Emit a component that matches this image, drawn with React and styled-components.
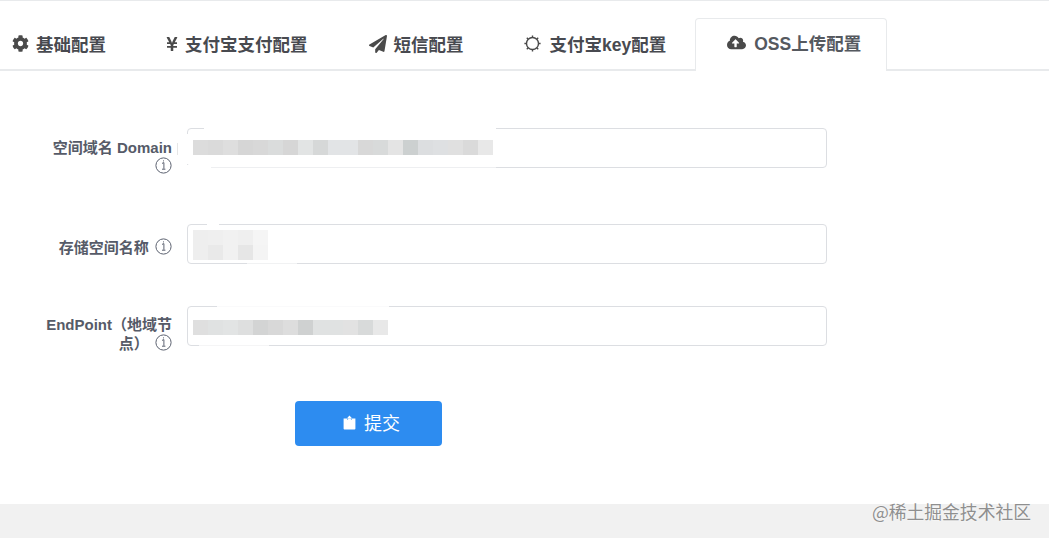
import React from "react";
import styled, { createGlobalStyle } from "styled-components";
import { FaCog, FaYenSign, FaPaperPlane, FaCloudUploadAlt } from "react-icons/fa";

const GlobalStyle = createGlobalStyle`
    html, body {
        margin: 0;
        padding: 0;
        background: #fff;
    }
    body {
        font-family: "Liberation Sans", "Noto Sans CJK SC", sans-serif;
        color: #515a6e;
    }
`;

const Page = styled.div`
    position: relative;
    width: 1049px;
    height: 538px;
    overflow: hidden;
    display: flex;
    flex-direction: column;
    border-top: 1px solid #e8eaec;
    box-sizing: border-box;
`;

const TabBar = styled.div`
    display: flex;
    align-items: flex-end;
    height: 70px;
    padding-top: 17px;
    box-sizing: border-box;
    border-bottom: 2px solid #e8eaec;
`;

const Tab = styled.div`
    display: flex;
    align-items: center;
    box-sizing: border-box;
    height: ${p => (p.$active ? "53px" : "51px")};
    margin-bottom: ${p => (p.$active ? "-2px" : "0")};
    padding: 0 ${p => p.$right}px ${p => (p.$active ? "5px" : "0")} ${p => p.$left}px;
    gap: ${p => p.$gap}px;
    font-size: 17.5px;
    font-weight: 700;
    color: ${p => (p.$active ? "#55595f" : "#484a50")};
    white-space: nowrap;
    background: #fff;
    border: ${p => (p.$active ? "1px solid #e8eaec" : "0")};
    border-bottom: 0;
    border-radius: ${p => (p.$active ? "4px 4px 0 0" : "0")};
    svg {
        flex: none;
        color: #4a4a4a;
    }
`;

const Form = styled.div`
    display: flex;
    flex-direction: column;
    padding: 57px 0 0 42px;
`;

const Row = styled.div`
    display: flex;
    gap: 15px;
    height: 40px;
    margin-bottom: ${p => p.$space}px;
`;

const Label = styled.div`
    width: 130px;
    flex: none;
    padding-top: ${p => p.$top}px;
    box-sizing: border-box;
    text-align: right;
    font-size: 15px;
    font-weight: 700;
    line-height: 18px;
    color: #565b68;
`;

const Hint = styled.svg`
    width: 17px;
    height: 17px;
    margin-left: ${p => p.$left}px;
    vertical-align: -2px;
`;

const Field = styled.div`
    position: relative;
    width: 640px;
    height: 40px;
`;

const Input = styled.input`
    display: block;
    width: 100%;
    height: 100%;
    box-sizing: border-box;
    border: 1px solid #dcdee2;
    border-radius: 4px;
    background: #fff;
    outline: none;
`;

const Mosaic = styled.div`
    position: absolute;
    left: 6px;
    top: ${p => p.$top}px;
    display: grid;
    grid-template-columns: repeat(${p => p.$cols}, 15px);
    grid-auto-rows: 15px;
`;

const Pixel = styled.span`
    background: ${p => p.$tone};
`;

// the white smear left over from retouching, it eats parts of the input border
const Smear = styled.div`
    position: absolute;
    left: ${p => p.$x}px;
    top: ${p => p.$y}px;
    width: ${p => p.$w}px;
    height: ${p => p.$h}px;
    background: #fff;
    opacity: ${p => p.$fade || 1};
`;

const Tick = styled.div`
    position: absolute;
    left: -10px;
    top: 15px;
    width: 1px;
    height: 12px;
    background: #e6e6e6;
`;

const SubmitRow = styled.div`
    padding-left: 253px;
`;

const Submit = styled.button`
    display: flex;
    align-items: center;
    justify-content: center;
    gap: 8px;
    width: 147px;
    height: 45px;
    padding: 0 0 3px 6px;
    border: 0;
    border-radius: 4px;
    background: #2d8cf0;
    color: #fff;
    font-family: "Noto Sans CJK SC", sans-serif;
    font-size: 18px;
    font-weight: 400;
`;

const Footer = styled.div`
    position: absolute;
    left: 0;
    right: 0;
    bottom: 0;
    height: 34px;
    background: #f1f1f1;
`;

const Watermark = styled.div`
    position: absolute;
    right: 18px;
    bottom: 17px;
    font-family: "Noto Sans CJK SC", sans-serif;
    font-size: 17.8px;
    line-height: 20px;
    color: #8f8f8f;
    text-shadow: 0 0 2px #fff;
    white-space: nowrap;
`;

const InfoIcon = ({ left = 0 }) => (
    <Hint $left={left} viewBox="0 0 17 17">
        <circle cx="8.5" cy="8.5" r="7.6" fill="none" stroke="#5c6270" strokeWidth="1" />
        <path d="M7 6.4 L8.9 5.6 V11.8 M7 12.2 H10.4 M8.5 3.4 V4.4" fill="none" stroke="#5c6270" strokeWidth="1" />
    </Hint>
);

const BagIcon = () => (
    <svg width="13" height="15" viewBox="0 0 13 15">
        <path d="M6.5 0.5 L9.2 3.4 H3.8 Z" fill="#fff" />
        <path d="M0.6 3.4 H12.4 V13.8 C12.4 14.3 12 14.6 11.6 14.6 H1.4 C1 14.6 0.6 14.3 0.6 13.8 Z" fill="#fff" />
        <path d="M4.6 5 V3.4 M8.4 5 V3.4" stroke="#2d8cf0" strokeWidth="0.6" />
    </svg>
);

// thin ring with small ticks around it
const SunIcon = () => (
    <svg width="17" height="17" viewBox="0 0 17 17" fill="none" stroke="#4a4a4a">
        <circle cx="8.5" cy="8.5" r="6" strokeWidth="1.4" />
        <path
            d="M8.5 0.4 V2.4 M8.5 14.6 V16.6 M0.4 8.5 H2.4 M14.6 8.5 H16.6 M2.8 2.8 L4.2 4.2 M12.8 12.8 L14.2 14.2 M2.8 14.2 L4.2 12.8 M12.8 4.2 L14.2 2.8"
            strokeWidth="1.4"
        />
    </svg>
);

const tabs = [
    { icon: <FaCog size={17} />, text: "基础配置", left: 12, right: 30, gap: 7 },
    { icon: <FaYenSign size={16} />, text: "支付宝支付配置", left: 28, right: 30, gap: 5 },
    { icon: <FaPaperPlane size={18} />, text: "短信配置", left: 31, right: 30, gap: 7 },
    { icon: <SunIcon />, text: "支付宝key配置", left: 30, right: 29, gap: 9 },
    { icon: <FaCloudUploadAlt size={19} />, text: "OSS上传配置", left: 31, right: 25, gap: 8, active: true },
];

const domainTones = ["#dcdcdc", "#dadada", "#dedede", "#d6d6d6", "#d8d8d8", "#dadcdc", "#d6d6d6", "#e2e4e4", "#d6d8d8", "#e2e4e6", "#e2e4e6", "#d8d8d8", "#d8dada", "#e4e4e4", "#ccd0d0", "#dcdee0", "#dee0e2", "#e0e0e0", "#dadada", "#e8e8e8"];
const bucketTones = ["#eeeeee", "#efefef", "#f1f1f1", "#efefef", "#f5f5f5", "#eeeeee", "#e9e9e9", "#f1f1f1", "#e6e6e6", "#f4f4f4"];
const endpointTones = ["#dfdfdf", "#e0e2e2", "#e2e4e4", "#dedfdf", "#d3d4d4", "#d8d8d8", "#dddddd", "#cfd1d1", "#e0e2e2", "#e0e2e2", "#e2e2e2", "#d8dada", "#e8e8e8"];

const Blur = ({ tones, cols, top }) => (
    <Mosaic $cols={cols} $top={top}>
        {tones.map((tone, i) => <Pixel key={i} $tone={tone} />)}
    </Mosaic>
);

const App = () => {
    return (
        <Page>
            <GlobalStyle />
            <TabBar>
                {tabs.map(t => (
                    <Tab key={t.text} $active={t.active} $left={t.left} $right={t.right} $gap={t.gap}>
                        {t.icon}
                        {t.text}
                    </Tab>
                ))}
            </TabBar>
            <Form>
                <Row $space={56}>
                    <Label $top={11}>空间域名 Domain <InfoIcon /></Label>
                    <Field>
                        <Input readOnly />
                        <Smear $x={17} $y={-1} $w={292} $h={3} />
                        <Smear $x={-1} $y={6} $w={3} $h={30} />
                        <Smear $x={-1} $y={37} $w={25} $h={4} />
                        <Smear $x={24} $y={38} $w={285} $h={3} $fade={0.5} />
                        <Tick />
                        <Blur tones={domainTones} cols={20} top={12} />
                    </Field>
                </Row>
                <Row $space={42}>
                    <Label $top={14}>存储空间名称 <InfoIcon left={2} /></Label>
                    <Field>
                        <Input readOnly />
                        <Smear $x={20} $y={-1} $w={12} $h={3} />
                        <Smear $x={60} $y={38} $w={50} $h={3} $fade={0.6} />
                        <Blur tones={bucketTones} cols={5} top={6} />
                    </Field>
                </Row>
                <Row $space={55}>
                    <Label $top={10}>EndPoint（地域节点） <InfoIcon left={2} /></Label>
                    <Field>
                        <Input readOnly />
                        <Smear $x={30} $y={-1} $w={172} $h={3} $fade={0.85} />
                        <Smear $x={12} $y={38} $w={70} $h={3} $fade={0.7} />
                        <Blur tones={endpointTones} cols={13} top={14} />
                    </Field>
                </Row>
                <SubmitRow>
                    <Submit type="button">
                        <BagIcon />
                        提交
                    </Submit>
                </SubmitRow>
            </Form>
            <Footer />
            <Watermark>@稀土掘金技术社区</Watermark>
        </Page>
    );
};

export default App;
